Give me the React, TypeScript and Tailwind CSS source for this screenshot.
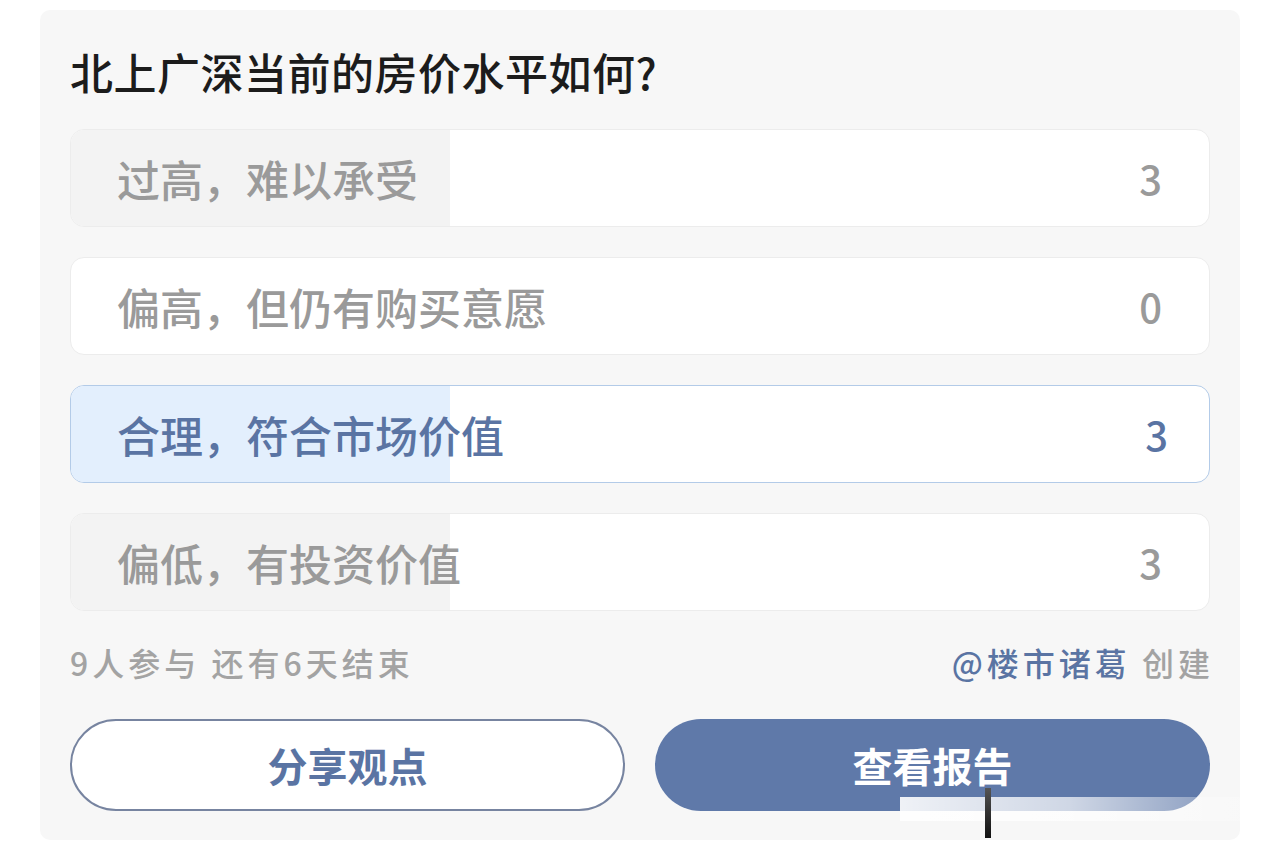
const options = [
  { label: "过高，难以承受", count: 3, picked: false },
  { label: "偏高，但仍有购买意愿", count: 0, picked: false },
  { label: "合理，符合市场价值", count: 3, picked: true },
  { label: "偏低，有投资价值", count: 3, picked: false },
];

const total = 9;

function Option({ label, count, picked }: { label: string; count: number; picked: boolean }) {
  const pct = (count / total) * 100;
  return (
    <div
      className={`relative flex h-[98px] items-center justify-between overflow-hidden rounded-[14px] border bg-white pr-[47px] pl-[46px] ${
        picked ? "border-[#b3cbe8]" : "border-[#ececec]"
      }`}
    >
      <div
        className={`absolute inset-y-0 left-0 ${picked ? "bg-[#e3effd]" : "bg-[#f3f3f3]"}`}
        style={{ width: `${pct}%` }}
      />
      <span
        className={`relative text-[43px] font-medium ${picked ? "text-[#5a74a3]" : "text-[#9a9a9a]"}`}
      >
        {label}
      </span>
      <span
        className={`relative text-[40px] font-medium ${picked ? "mr-[-6px] text-[#5a74a3]" : "text-[#9a9a9a]"}`}
      >
        {count}
      </span>
    </div>
  );
}

export default function App() {
  return (
    <div
      className="min-h-[842px] bg-white px-[40px] pt-[10px]"
      style={{ fontFamily: '"Noto Sans CJK SC", "Noto Sans", sans-serif' }}
    >
      <div className="relative flex h-[830px] flex-col rounded-[10px] bg-[#f7f7f7] px-[30px] pt-[40px]">
        <h1 className="text-[43px] leading-[42px] font-medium tracking-[0.5px] text-[#1c1c1c]">
          北上广深当前的房价水平如何?
        </h1>

        <div className="mt-[37px] flex flex-col gap-[30px]">
          {options.map((o) => (
            <Option key={o.label} {...o} />
          ))}
        </div>

        <div className="mt-[31px] flex items-center justify-between text-[32px] leading-[40px] font-medium tracking-[4px]">
          <span className="text-[#a3a3a3]">9人参与 还有6天结束</span>
          <span className="mr-[-4px] text-[#a3a3a3]">
            <span className="text-[#5a74a3]">@楼市诸葛</span> 创建
          </span>
        </div>

        <div className="mt-[37px] grid grid-cols-2 gap-[30px]">
          <button className="h-[92px] rounded-full border-2 border-[#7784a0] bg-white text-[40px] font-bold text-[#5a74a3]">
            分享观点
          </button>
          <button className="h-[92px] rounded-full bg-[#5f79a9] text-[40px] font-bold text-white">
            查看报告
          </button>
        </div>

        <div className="pointer-events-none absolute top-[787px] left-[860px] h-[24px] w-[340px] bg-gradient-to-r from-white/90 via-white/70 to-white/20" />
        <div className="pointer-events-none absolute top-[778px] left-[945px] h-[50px] w-[6px] bg-gradient-to-b from-[#555] to-[#111]" />
      </div>
    </div>
  );
}
